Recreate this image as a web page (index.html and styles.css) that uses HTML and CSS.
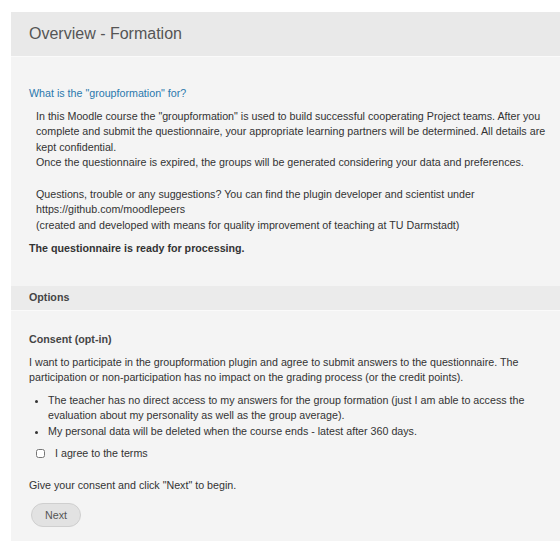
FILE: index.html
```html
<!DOCTYPE html>
<html>
<head>
<meta charset="utf-8">
<link rel="stylesheet" href="styles.css">
</head>
<body>
<div class="panel">
  <div class="panel-head"><h2 class="title">Overview - Formation</h2></div>
  <div class="panel-body">
    <h4 class="q-title">What is the "groupformation" for?</h4>
    <div class="intro">
      <p>In this Moodle course the "groupformation" is used to build successful cooperating Project teams. After you complete and submit the questionnaire, your appropriate learning partners will be determined. All details are kept confidential.<br>Once the questionnaire is expired, the groups will be generated considering your data and preferences.</p>
      <p>Questions, trouble or any suggestions? You can find the plugin developer and scientist under<br>https://github.com/moodlepeers<br>(created and developed with means for quality improvement of teaching at TU Darmstadt)</p>
    </div>
    <p class="status">The questionnaire is ready for processing.</p>
  </div>
  <div class="section-head">Options</div>
  <div class="panel-body options">
    <h4 class="consent-title">Consent (opt-in)</h4>
    <p class="consent-text">I want to participate in the groupformation plugin and agree to submit answers to the questionnaire. The participation or non-participation has no impact on the grading process (or the credit points).</p>
    <ul class="consent-list">
      <li>The teacher has no direct access to my answers for the group formation (just I am able to access the evaluation about my personality as well as the group average).</li>
      <li>My personal data will be deleted when the course ends - latest after 360 days.</li>
    </ul>
    <label class="agree"><input type="checkbox" class="agree-box"><span>I agree to the terms</span></label>
    <p class="hint">Give your consent and click "Next" to begin.</p>
    <button class="next-btn" type="button">Next</button>
  </div>
</div>
</body>
</html>
```
FILE: styles.css
```css
html, body {
  margin: 0;
  padding: 0;
  background: #ffffff;
}

body {
  padding: 12px 0 0 11px;
  font-family: "Liberation Sans", Arial, sans-serif;
  font-size: 10.7px;
  line-height: 15.6px;
  color: #333333;
}

.panel {
  background: #f4f4f4;
  min-height: 529px;
}

.panel-head {
  background: #e9e9e9;
  height: 44px;
  border-bottom: 1px solid #fafafa;
  display: flex;
  align-items: center;
  padding-left: 18px;
}

.title {
  margin: 0;
  font-size: 16px;
  font-weight: normal;
  color: #555555;
}

.panel-body {
  padding: 29px 6px 12px 18px;
}

.q-title {
  margin: 0 0 7px 0;
  font-size: 10.7px;
  font-weight: normal;
  color: #2a78ad;
}

.intro {
  padding-left: 7px;
}

.intro p {
  margin: 0 0 15.6px 0;
}

.intro p:last-child {
  margin-bottom: 8px;
}

.status {
  margin: 0 0 17px 0;
  font-weight: bold;
}

.section-head {
  background: #ebebeb;
  height: 24px;
  border-bottom: 1px solid #fafafa;
  display: flex;
  align-items: center;
  padding-left: 18px;
  font-weight: bold;
  color: #444444;
}

.options {
  padding-top: 21px;
}

.consent-title {
  margin: 0 0 7px 0;
  font-size: 10.7px;
  font-weight: bold;
  color: #444444;
}

.consent-text {
  margin: 0 0 7px 0;
  max-width: 520px;
}

.consent-list {
  margin: 0 0 6px 0;
  padding-left: 19px;
}

.agree {
  display: flex;
  align-items: center;
  margin-left: 7px;
}

.agree-box {
  width: 9px;
  height: 9px;
  margin: 0 10px 0 0;
  accent-color: #cccccc;
}

.hint {
  margin: 17px 0 9px 0;
}

.next-btn {
  margin-left: 2px;
  width: 50px;
  height: 24px;
  border: 1px solid #cfcfcf;
  border-radius: 12px;
  background: #e2e2e2;
  color: #555555;
  font-family: "Liberation Sans", Arial, sans-serif;
  font-size: 10.7px;
  padding: 0;
}
```
